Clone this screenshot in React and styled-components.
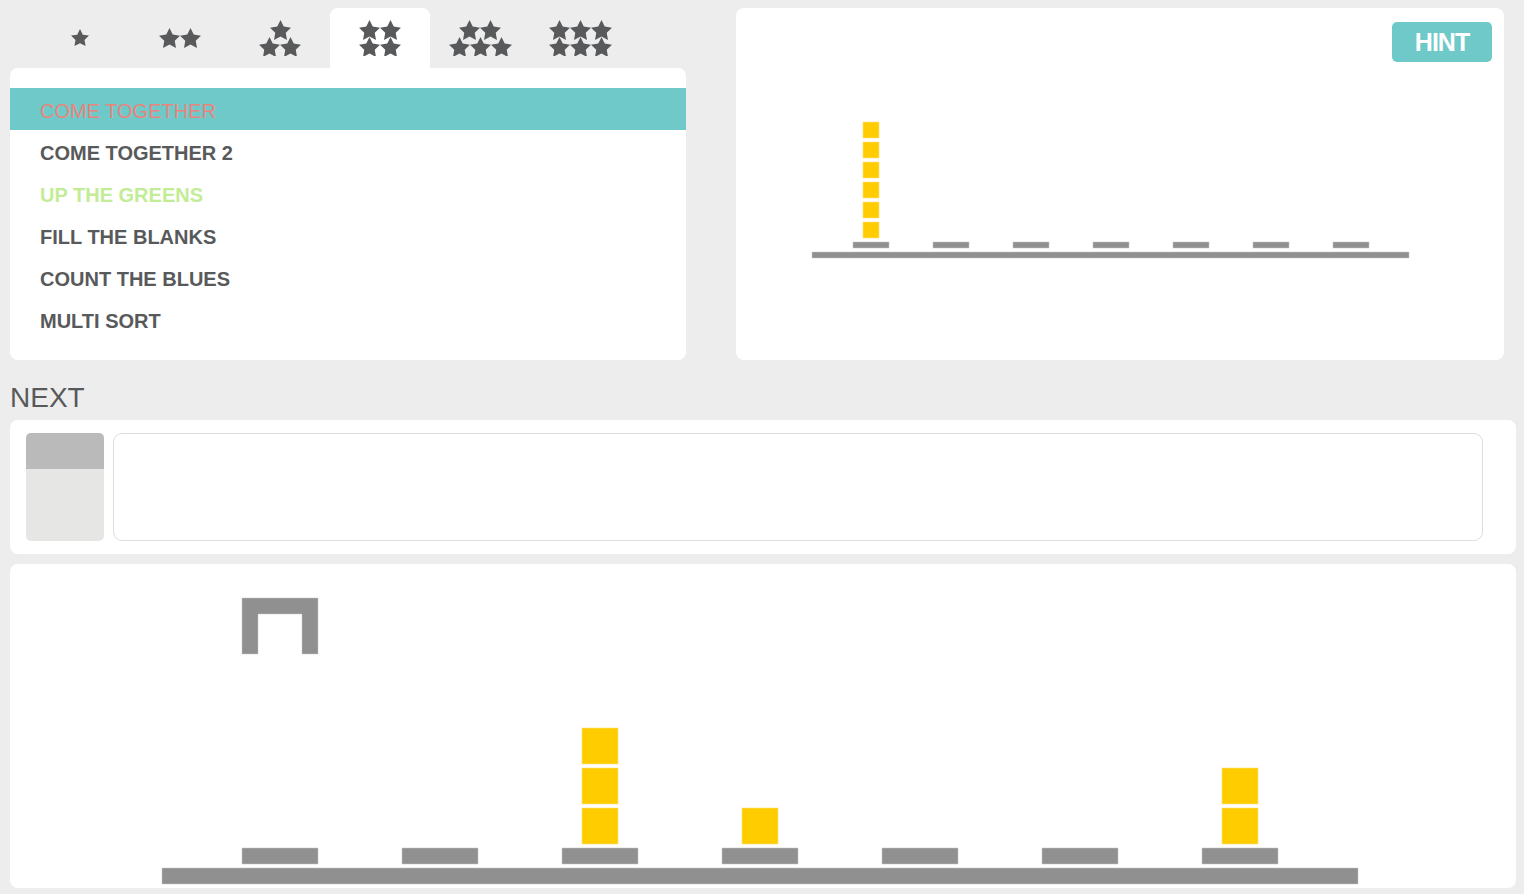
import React, { useState } from "react";
import styled, { createGlobalStyle } from "styled-components";

const GlobalStyle = createGlobalStyle`
  body {
    margin: 0;
    background: #ededed;
    font-family: "Liberation Sans", Arial, sans-serif;
    color: #58595b;
  }
`;

const Page = styled.div`
  padding: 8px 8px 6px 10px;
`;

const TopRow = styled.div`
  display: flex;
  gap: 50px;
  height: 352px;
`;

const LeftColumn = styled.div`
  width: 676px;
  display: flex;
  flex-direction: column;
`;

const Tabs = styled.div`
  display: flex;
  height: 60px;
  padding-left: 20px;
`;

const Tab = styled.button`
  width: 100px;
  height: 60px;
  border: 0;
  padding: 0;
  border-radius: 8px 8px 0 0;
  background: ${(p) => (p.$active ? "#fff" : "transparent")};
  display: flex;
  align-items: center;
  justify-content: center;
  cursor: pointer;
`;

const StarStack = styled.div`
  display: flex;
  flex-direction: column;
  align-items: center;
`;

const StarRow = styled.div`
  display: flex;
  & + & {
    margin-top: -3px;
  }
`;

const ListPanel = styled.ul`
  flex: 1;
  list-style: none;
  margin: 0;
  padding: 20px 0;
  background: #fff;
  border-radius: 8px;
`;

const Item = styled.li`
  height: 42px;
  display: flex;
  align-items: center;
  padding: 4px 0 0 30px;
  box-sizing: border-box;
  font-size: 20px;
  font-weight: ${(p) => (p.$selected ? 400 : 700)};
  color: ${(p) => p.$color};
  background: ${(p) => (p.$selected ? "#6fc9c8" : "transparent")};
  cursor: pointer;
`;

const PreviewPanel = styled.div`
  position: relative;
  width: 768px;
  background: #fff;
  border-radius: 8px;
`;

const HintButton = styled.button`
  position: absolute;
  top: 14px;
  right: 12px;
  width: 100px;
  height: 40px;
  border: 0;
  border-radius: 5px;
  background: #6fc9c8;
  color: #fff;
  font-family: "Liberation Sans", Arial, sans-serif;
  font-weight: 700;
  font-size: 25px;
  letter-spacing: -1px;
  cursor: pointer;
`;

const SectionLabel = styled.h2`
  margin: 16px 0 0;
  height: 44px;
  line-height: 44px;
  font-size: 28px;
  font-weight: 400;
  color: #58595b;
`;

const NextPanel = styled.div`
  display: flex;
  gap: 9px;
  padding: 13px 33px 13px 16px;
  background: #fff;
  border-radius: 8px;
  height: 134px;
  box-sizing: border-box;
`;

const NextCard = styled.div`
  width: 78px;
  border-radius: 5px;
  overflow: hidden;
  background: #e6e6e5;
  display: flex;
  flex-direction: column;
`;

const NextCardTop = styled.div`
  height: 36px;
  background: #bababa;
`;

const NextInput = styled.div`
  flex: 1;
  border: 1.5px solid #dedede;
  border-radius: 9px;
  box-sizing: border-box;
  height: 108px;
`;

const StagePanel = styled.div`
  margin-top: 10px;
  height: 324px;
  background: #fff;
  border-radius: 8px;
`;

const STAR_PATH =
  "M12 2l3.09 6.26L22 9.27l-5 4.87 1.18 6.88L12 17.77l-6.18 3.25L7 14.14 2 9.27l6.91-1.01L12 2z";

const Star = ({ size = 21 }) => (
  <svg width={size} height={size * 0.95} viewBox="2 2 20 19">
    <path d={STAR_PATH} fill="#58595b" />
  </svg>
);

const tabRows = [[1], [2], [1, 2], [2, 2], [2, 3], [3, 3]];

const levels = [
  { name: "COME TOGETHER", color: "#ea857e" },
  { name: "COME TOGETHER 2", color: "#58595b" },
  { name: "UP THE GREENS", color: "#c3ec97" },
  { name: "FILL THE BLANKS", color: "#58595b" },
  { name: "COUNT THE BLUES", color: "#58595b" },
  { name: "MULTI SORT", color: "#58595b" },
];

const YELLOW = "#ffcc00";
const YELLOW_EDGE = "#ffe27a";
const GREY = "#909090";
const GREY_EDGE = "#c4c4c4";

const smallStage = {
  baseX: 76, baseY: 244, baseW: 597, baseH: 6,
  padX: 117, padPitch: 80, padY: 234, padW: 36, padH: 6,
  block: 16, blockPitch: 20,
};

const bigStage = {
  baseX: 152, baseY: 304, baseW: 1196, baseH: 16,
  padX: 232, padPitch: 160, padY: 284, padW: 76, padH: 16,
  block: 36, blockPitch: 40,
};

// stacks: number of blocks on each of the 7 pads
function Stage({ d, stacks, crane, width, height }) {
  const padLeft = (i) => d.padX + i * d.padPitch;
  const blockX = (i) => padLeft(i) + (d.padW - d.block) / 2;
  return (
    <svg width={width} height={height} style={{ display: "block" }}>
      <rect
        x={d.baseX}
        y={d.baseY}
        width={d.baseW}
        height={d.baseH}
        fill={GREY}
        stroke={GREY_EDGE}
        strokeWidth="0.5"
      />
      {stacks.map((n, i) => (
        <g key={i}>
          <rect
            x={padLeft(i)}
            y={d.padY}
            width={d.padW}
            height={d.padH}
            fill={GREY}
            stroke={GREY_EDGE}
            strokeWidth="0.5"
          />
          {Array.from({ length: n }).map((_, k) => (
            <rect
              key={k}
              x={blockX(i)}
              y={d.padY - 4 - d.block - k * d.blockPitch}
              width={d.block}
              height={d.block}
              fill={YELLOW}
              stroke={YELLOW_EDGE}
              strokeWidth="0.6"
            />
          ))}
        </g>
      ))}
      {crane && (
        <path
          d={`M${padLeft(0)} 34 h76 v56 h-16 v-40 h-44 v40 h-16 z`}
          fill={GREY}
          stroke={GREY_EDGE}
          strokeWidth="0.5"
        />
      )}
    </svg>
  );
}

export default function App() {
  const [tab, setTab] = useState(3);
  const [level, setLevel] = useState(0);

  return (
    <Page>
      <GlobalStyle />
      <TopRow>
        <LeftColumn>
          <Tabs>
            {tabRows.map((rows, i) => (
              <Tab key={i} $active={i === tab} onClick={() => setTab(i)}>
                <StarStack>
                  {rows.map((count, r) => (
                    <StarRow key={r}>
                      {Array.from({ length: count }).map((_, k) => (
                        <Star key={k} size={i === 0 ? 18 : 21} />
                      ))}
                    </StarRow>
                  ))}
                </StarStack>
              </Tab>
            ))}
          </Tabs>
          <ListPanel>
            {levels.map((l, i) => (
              <Item
                key={l.name}
                $color={l.color}
                $selected={i === level}
                onClick={() => setLevel(i)}
              >
                {l.name}
              </Item>
            ))}
          </ListPanel>
        </LeftColumn>
        <PreviewPanel>
          <Stage d={smallStage} stacks={[6, 0, 0, 0, 0, 0, 0]} width={768} height={352} />
          <HintButton>HINT</HintButton>
        </PreviewPanel>
      </TopRow>

      <SectionLabel>NEXT</SectionLabel>
      <NextPanel>
        <NextCard>
          <NextCardTop />
        </NextCard>
        <NextInput />
      </NextPanel>

      <StagePanel>
        <Stage d={bigStage} stacks={[0, 0, 3, 1, 0, 0, 2]} crane width={1506} height={324} />
      </StagePanel>
    </Page>
  );
}
